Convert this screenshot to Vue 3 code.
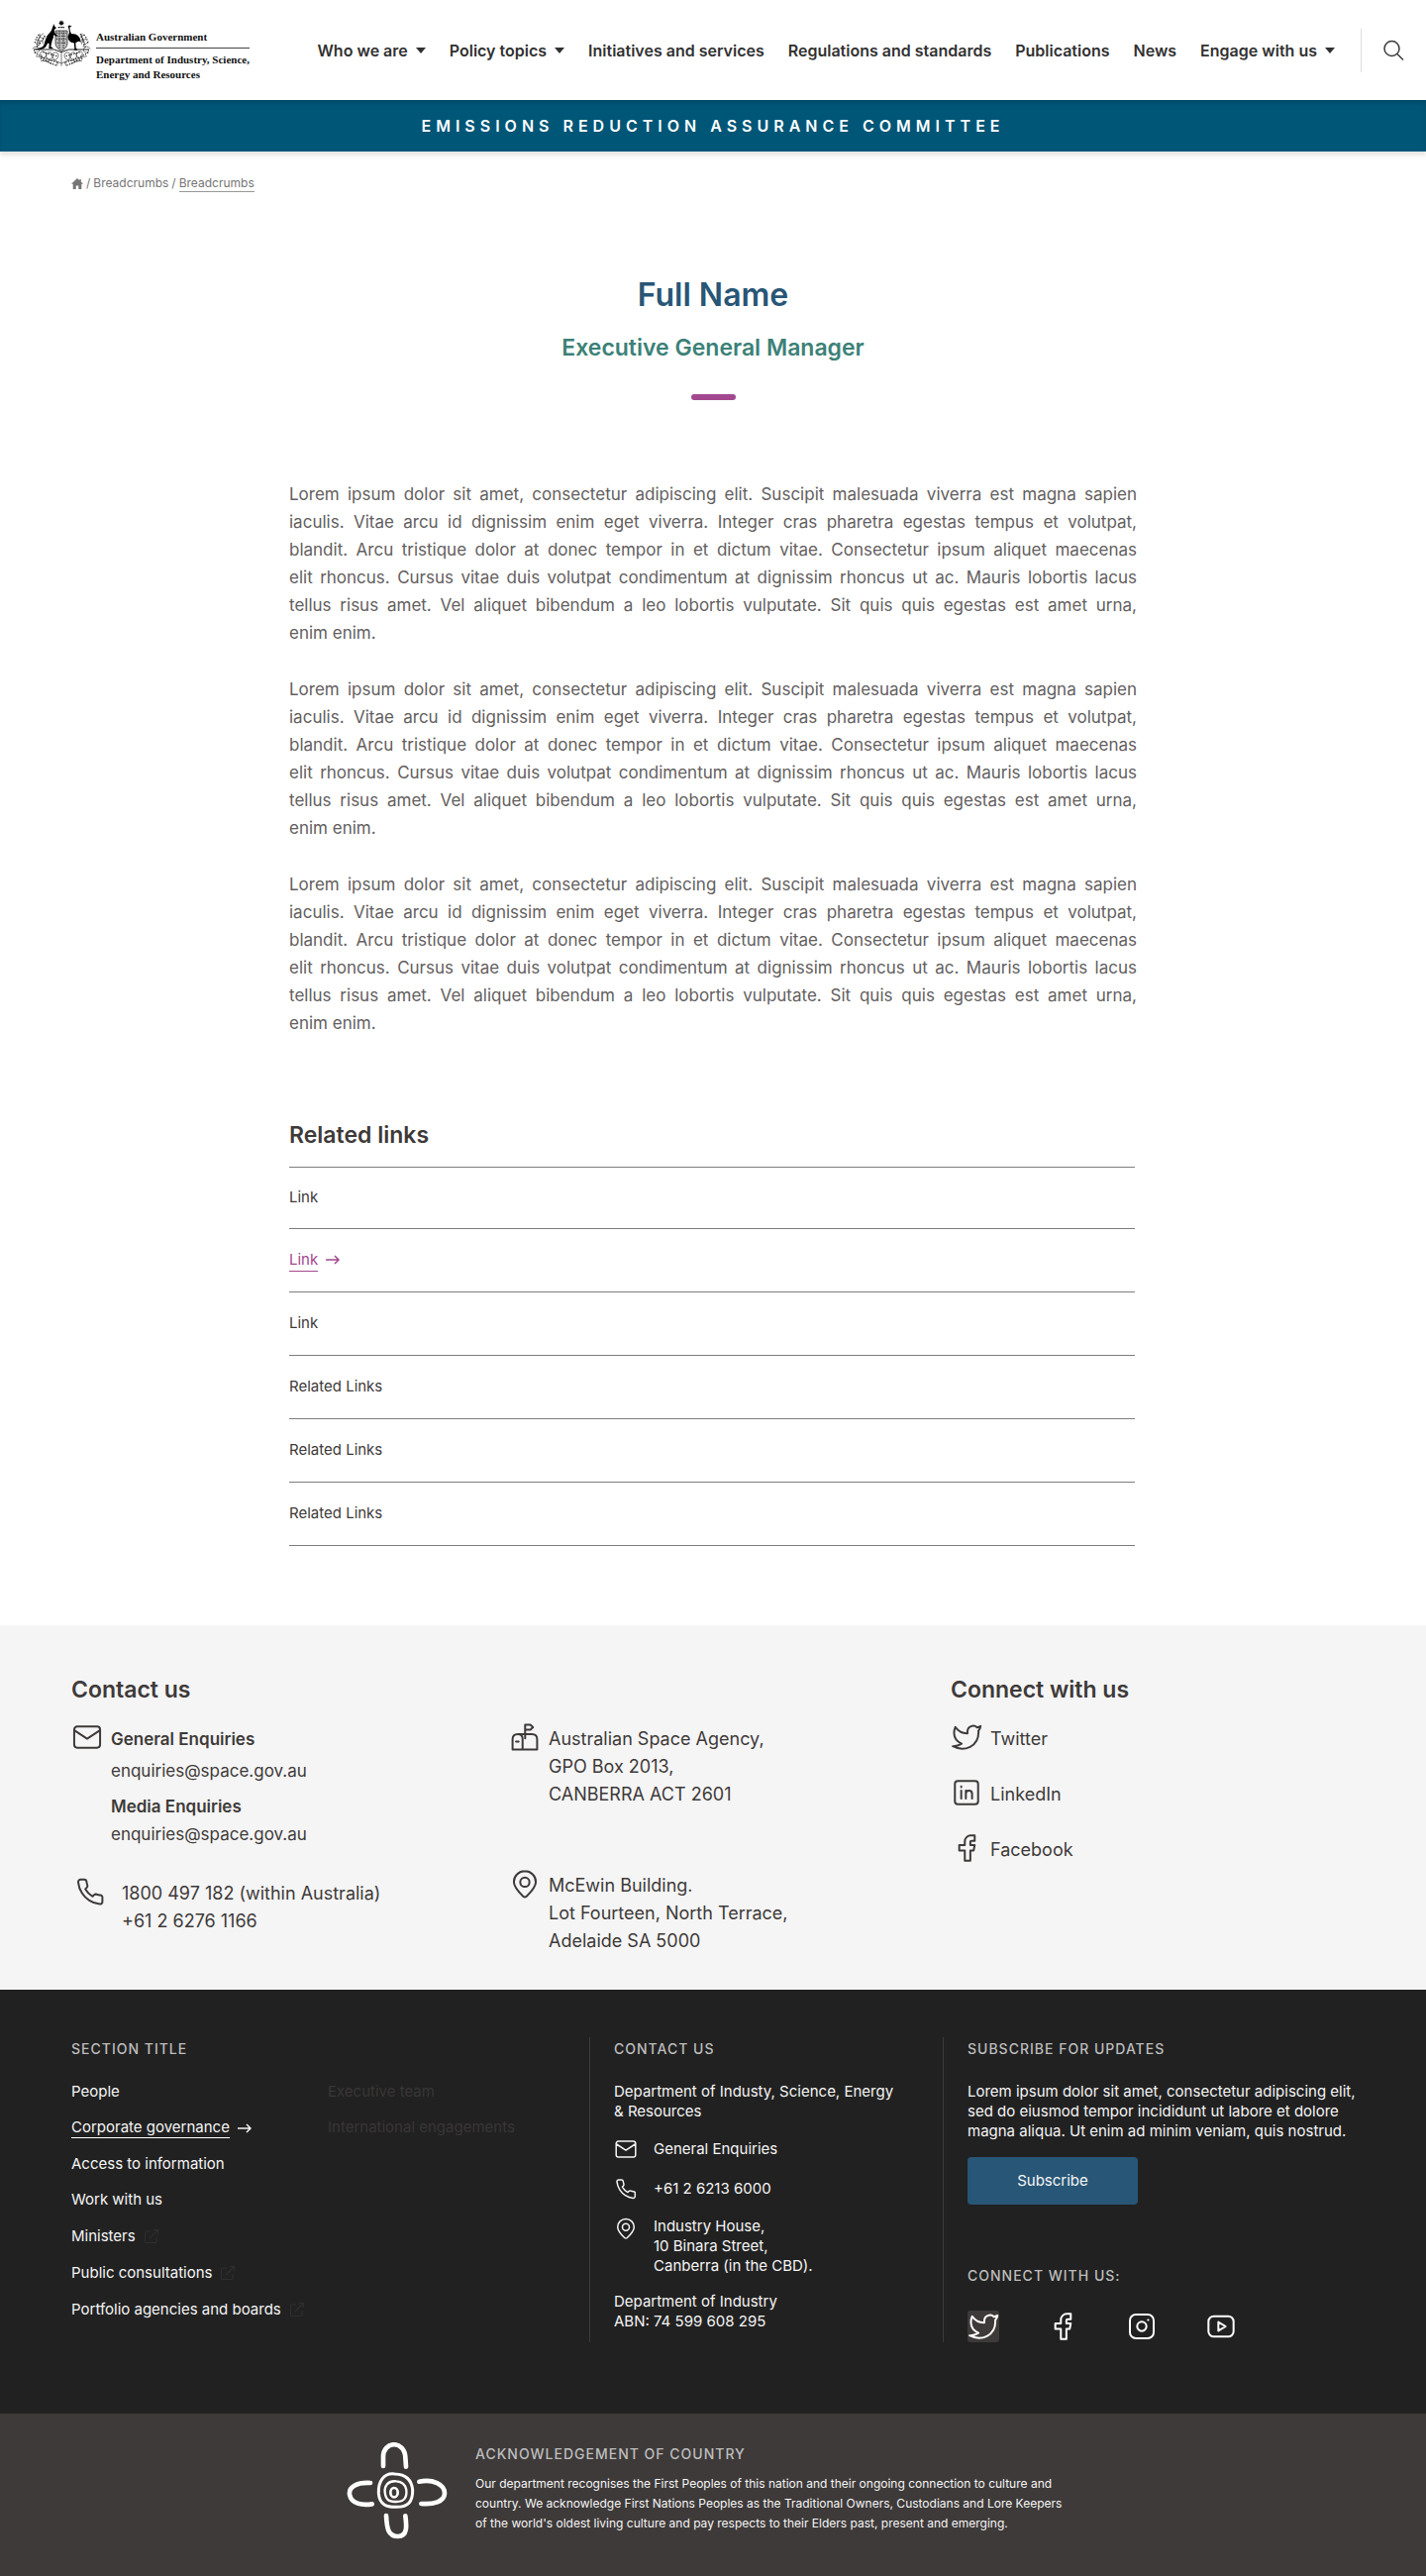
<script setup>
const nav = [
  { label: 'Who we are', menu: true },
  { label: 'Policy topics', menu: true },
  { label: 'Initiatives and services' },
  { label: 'Regulations and standards' },
  { label: 'Publications' },
  { label: 'News' },
  { label: 'Engage with us', menu: true },
]

const bioLines = [
  'Lorem ipsum dolor sit amet, consectetur adipiscing elit. Suscipit malesuada viverra est magna sapien',
  'iaculis. Vitae arcu id dignissim enim eget viverra. Integer cras pharetra egestas tempus et volutpat,',
  'blandit. Arcu tristique dolor at donec tempor in et dictum vitae. Consectetur ipsum aliquet maecenas',
  'elit rhoncus. Cursus vitae duis volutpat condimentum at dignissim rhoncus ut ac. Mauris lobortis lacus',
  'tellus risus amet. Vel aliquet bibendum a leo lobortis vulputate. Sit quis quis egestas est amet urna,',
  'enim enim.',
]

const related = [
  { label: 'Link' },
  { label: 'Link', active: true },
  { label: 'Link' },
  { label: 'Related Links' },
  { label: 'Related Links' },
  { label: 'Related Links' },
]

const sectionLinks = [
  { label: 'People' },
  { label: 'Corporate governance', active: true },
  { label: 'Access to information' },
  { label: 'Work with us' },
  { label: 'Ministers', external: true },
  { label: 'Public consultations', external: true },
  { label: 'Portfolio agencies and boards', external: true },
]

const icons = {
  mail: 'M4.5 4h15A2.3 2.3 0 0 1 21.8 6.3v11.4a2.3 2.3 0 0 1-2.3 2.3h-15a2.3 2.3 0 0 1-2.3-2.3V6.3A2.3 2.3 0 0 1 4.5 4ZM2.6 7 12 13.2 21.4 7',
  phone:
    'M21.3 17v2.6a1.8 1.8 0 0 1-2 1.8 18 18 0 0 1-7.9-2.8 17.7 17.7 0 0 1-5.5-5.5A18 18 0 0 1 3 4.9a1.8 1.8 0 0 1 1.8-2h2.7a1.8 1.8 0 0 1 1.8 1.6c.1.9.3 1.7.6 2.5a1.8 1.8 0 0 1-.4 1.9L8.4 10.1a14.5 14.5 0 0 0 5.5 5.5l1.1-1.1a1.8 1.8 0 0 1 1.9-.4c.8.3 1.7.5 2.5.6A1.8 1.8 0 0 1 21.3 17Z',
  pin: 'M12 2.5c-4.7 0-8.3 3.6-8.3 8.2 0 3.5 2.3 6.3 7 10.8q1.3 1.1 2.6 0c4.7-4.5 7-7.3 7-10.8 0-4.6-3.6-8.2-8.3-8.2ZM12 7.3a3.5 3.5 0 1 0 0 7 3.5 3.5 0 0 0 0-7Z',
  mailbox:
    'M2.7 21.3v-7.6c0-2.4 1.6-3.9 4-3.9h10.6c2.4 0 4 1.5 4 3.9v7.6ZM6.7 9.8c2.3 0 3.6 1.5 3.6 3.9v7.6M5.3 15.3h2M12.2 13V2.7M12.2 2.7h4l2 1.8-2 1.9h-4',
  twitter:
    'M22.7 3.7c-.9.5-1.7.8-2.7 1-2.6-2.6-7.4-.9-7.3 3.5v.9c-3.8.1-6.9-1.6-9.2-4.7 0 0-4 8.6 4.8 12.6-2 1.3-4.3 2-6.7 1.9 9 4.7 19.5 0 19.5-10.7l-.1-1c.9-.9 1.5-2.1 1.7-3.5Z',
  linkedin:
    'M5.5 3.2h13a2.3 2.3 0 0 1 2.3 2.3v13a2.3 2.3 0 0 1-2.3 2.3h-13a2.3 2.3 0 0 1-2.3-2.3v-13a2.3 2.3 0 0 1 2.3-2.3ZM8 10.5v6M8 7.4v.5M11.5 16.5v-6M11.5 12.8c0-3 4.7-3 4.7 0v3.7',
  facebook:
    'M18.2 2.5h-3a4.5 4.5 0 0 0-4.5 4.5v2.8H6.5v4.1h4.2v7.7h4.2v-7.7h2.5l.8-4.1h-3.3V7.4c0-.5.4-.9.9-.9h2.4Z',
  instagram:
    'M7.5 3h9A4.5 4.5 0 0 1 21 7.5v9a4.5 4.5 0 0 1-4.5 4.5h-9A4.5 4.5 0 0 1 3 16.5v-9A4.5 4.5 0 0 1 7.5 3ZM12 8.5a3.5 3.5 0 1 0 0 7 3.5 3.5 0 0 0 0-7ZM16.7 7.2h.2',
  youtube:
    'M6.5 4.3h11a4 4 0 0 1 4 4v7.4a4 4 0 0 1-4 4h-11a4 4 0 0 1-4-4V8.3a4 4 0 0 1 4-4ZM10 8.7l5.5 3.3-5.5 3.3Z',
}

const social = ['Twitter', 'LinkedIn', 'Facebook']
const footerSocial = ['twitter', 'facebook', 'instagram', 'youtube']
</script>

<template>
  <div class="page">
    <header class="top">
      <a href="#" class="brand">
        <svg class="crest" viewBox="36 30 180 144" aria-hidden="true">
          <circle cx="126" cy="40" r="6" fill="#111" />
          <path d="M126 31v18M117 40h18M120 34l12 12M132 34l-12 12" stroke="#111" stroke-width="1.5" />
          <path d="M116 53h20" stroke="#222" stroke-width="4" stroke-dasharray="4 1" />
          <path d="M108 63h36v40q-2 14-18 21-16-7-18-21Z" fill="#bbb" stroke="#333" stroke-width="2.5" />
          <path d="M111 70h30M111 88h30M120 63v56M132 63v56M112 79h28M113 100h26" stroke="#444" stroke-width="4" stroke-dasharray="4 3" />
          <path
            d="M103 42l2 7q5 3 5 7l-5 3q-1 5 0 9l6 8 4 2-5 2-7-5q0 10-5 18l-4 18 8 6h-14l1-14q-3-4-5-1-6 15-18 17-11 2-24 1 17-3 27-8 5-5 8-20 3-14 13-22 7-8 9-17Z"
            fill="#000"
          />
          <path
            d="M146 49q4-4 8-1l4 3h-6q-2 7 1 14 2 9 8 8 9-1 15 5 9 8 9 21-5-6-9-3l-7 4 1 15 6 7h-13l3-5-2-17q-13-2-17-11-4-8 1-15 3-4 1-13-2-8-3-12Z"
            fill="#000"
          />
          <path d="M42 120h62l22 8 22-8h62" fill="none" stroke="#222" stroke-width="3" />
          <g fill="none" stroke="#222" stroke-width="1.8">
            <path d="M54 113q-6-14 2-24 8-5 4-17M61 105q-10-15 2-27l9-7M70 103q-4-16 8-22M49 103l13-4M52 91l12 4M59 82l14 5M192 113q8-14 0-25-8-8-3-17M187 104q8-15-2-27M197 106l11-10M187 93l14-5M185 82l10-7" />
            <path d="M38 118q12-13 20-1 4 11-8 12-10-1-5-9M214 118q-12-13-20-1-4 11 8 12 10-1 5-9M60 133q9-14 18-2 7 12-6 15-12-1-8-13M192 133q-9-14-18-2-7 12 6 15 12-1 8-13M80 136q10-14 18-3 6 14-7 17-13-1-11-14M172 136q-10-14-18-3-6 14 7 17 13-1 11-14M100 132q12-8 17 4 0 14-12 15-10-6-5-19M152 132q-12-8-17 4 0 14 12 15 10-6 5-19M48 140l20 4 15 10 20-2 23 10 23-10 20 2 15-10 20-4M63 154l18 2 16 8M189 154l-18 2-16 8M126 128v42M117 158l-6 12M135 158l6 12" />
          </g>
          <g fill="none" stroke="#222" stroke-width="4.5" stroke-linecap="round" stroke-dasharray="0 8">
            <path d="M46 98q4-18 16-26M52 112q14-16 26-38M206 98q-4-18-16-26M198 112l-14-38M46 130q30 18 70 30M206 130q-30 18-70 30M64 148l50 22M188 148l-50 22M72 128l40 12M180 128l-40 12" />
          </g>
        </svg>
        <span class="brand-text">
          <span class="gov">Australian Government</span>
          <span class="dept">Department of Industry, Science,<br />Energy and Resources</span>
        </span>
      </a>
      <nav class="nav">
        <a v-for="item in nav" :key="item.label" href="#">
          {{ item.label }}
          <svg v-if="item.menu" class="caret" viewBox="0 0 10 6" aria-hidden="true"><path d="M0 0h10L5 6Z" fill="currentColor" /></svg>
        </a>
      </nav>
      <button class="search" type="button" aria-label="Search">
        <svg viewBox="0 0 24 24" aria-hidden="true"><circle cx="10.500" cy="10" r="7.5" /><path d="m16 15.500 6 6" /></svg>
      </button>
    </header>

    <div class="banner">Emissions Reduction Assurance Committee</div>

    <nav class="crumbs" aria-label="Breadcrumb">
      <a href="#" aria-label="Home">
        <svg viewBox="0 0 12 11" aria-hidden="true"><path d="M6 0 0 5.7h1.7V11h3V7.4h2.6V11h3V5.7H12L9.8 3.6V1H8.4v1.3Z" fill="#757575" /></svg>
      </a>
      <span>/</span><a href="#">Breadcrumbs</a><span>/</span><a href="#" class="current">Breadcrumbs</a>
    </nav>

    <main class="profile">
      <h1>Full Name</h1>
      <p class="role">Executive General Manager</p>
      <div class="bar"></div>
      <div class="bio">
        <p v-for="n in 3" :key="n">
          <span v-for="line in bioLines" :key="line">{{ line }}</span>
        </p>
      </div>
      <section class="related">
        <h2>Related links</h2>
        <ul>
          <li v-for="(item, i) in related" :key="i" :class="{ active: item.active }">
            <a href="#">{{ item.label }}</a>
            <svg v-if="item.active" class="arrow" viewBox="0 0 14 10" aria-hidden="true"><path d="M0 5h13M9 1l4 4-4 4" /></svg>
          </li>
        </ul>
      </section>
    </main>

    <section class="contact">
      <div class="col">
        <h2>Contact us</h2>
        <div class="item">
          <svg class="icon" viewBox="0 0 24 24" aria-hidden="true"><path :d="icons.mail" /></svg>
          <div class="text emails">
            <strong>General Enquiries</strong>
            <a href="#">enquiries@space.gov.au</a>
            <strong>Media Enquiries</strong>
            <a href="#">enquiries@space.gov.au</a>
          </div>
        </div>
        <div class="item phone">
          <svg class="icon" viewBox="0 0 24 24" aria-hidden="true"><path :d="icons.phone" /></svg>
          <div class="text">1800 497 182 (within Australia)<br />+61 2 6276 1166</div>
        </div>
      </div>
      <div class="col places">
        <div class="item">
          <svg class="icon" viewBox="0 0 24 24" aria-hidden="true"><path :d="icons.mailbox" /></svg>
          <address class="text">Australian Space Agency,<br />GPO Box 2013,<br />CANBERRA ACT 2601</address>
        </div>
        <div class="item">
          <svg class="icon" viewBox="0 0 24 24" aria-hidden="true"><path :d="icons.pin" /></svg>
          <address class="text">McEwin Building.<br />Lot Fourteen, North Terrace,<br />Adelaide SA 5000</address>
        </div>
      </div>
      <div class="col connect">
        <h2>Connect with us</h2>
        <a v-for="name in social" :key="name" href="#" class="item">
          <svg class="icon" viewBox="0 0 24 24" aria-hidden="true"><path :d="icons[name.toLowerCase()]" /></svg>
          <span class="text">{{ name }}</span>
        </a>
      </div>
    </section>

    <footer class="footer">
      <div class="fcol sections">
        <h3>Section title</h3>
        <div class="lists">
          <ul>
            <li v-for="item in sectionLinks" :key="item.label" :class="{ active: item.active, external: item.external }">
              <a href="#">{{ item.label }}</a>
              <svg v-if="item.active" class="arrow" viewBox="0 0 14 10" aria-hidden="true"><path d="M0 5h13M9 1l4 4-4 4" /></svg>
              <svg v-if="item.external" class="ext" viewBox="0 0 16 16" aria-hidden="true"><path d="M7 3H3a1.5 1.5 0 0 0-1.5 1.5v8.500A1.5 1.5 0 0 0 3 14.500h8.500A1.5 1.5 0 0 0 13 13V9M6 10l8.500-8.500M10 1.500h4.500V6" /></svg>
            </li>
          </ul>
          <ul class="dim">
            <li><a href="#">Executive team</a></li>
            <li><a href="#">International engagements</a></li>
          </ul>
        </div>
      </div>
      <div class="fcol">
        <h3>Contact us</h3>
        <div class="stack">
          <p>Department of Industy, Science, Energy<br />&amp; Resources</p>
          <a href="#" class="line">
            <svg viewBox="0 0 24 24" aria-hidden="true"><path :d="icons.mail" /></svg><span>General Enquiries</span>
          </a>
          <a href="#" class="line">
            <svg viewBox="0 0 24 24" aria-hidden="true"><path :d="icons.phone" /></svg><span>+61 2 6213 6000</span>
          </a>
          <div class="line top-line">
            <svg viewBox="0 0 24 24" aria-hidden="true"><path :d="icons.pin" /></svg>
            <address>Industry House,<br />10 Binara Street,<br />Canberra (in the CBD).</address>
          </div>
          <p>Department of Industry<br />ABN: 74 599 608 295</p>
        </div>
      </div>
      <div class="fcol">
        <h3>Subscribe for updates</h3>
        <p class="blurb">
          Lorem ipsum dolor sit amet, consectetur adipiscing elit,<br />sed do eiusmod tempor incididunt ut labore et dolore<br />magna
          aliqua. Ut enim ad minim veniam, quis nostrud.
        </p>
        <button class="subscribe" type="button">Subscribe</button>
        <h3>Connect with us:</h3>
        <div class="social">
          <a v-for="(name, i) in footerSocial" :key="name" href="#" :aria-label="name" :class="{ on: i === 0 }">
            <svg viewBox="0 0 24 24" aria-hidden="true"><path :d="icons[name]" /></svg>
          </a>
        </div>
      </div>
    </footer>

    <section class="country">
      <svg class="emblem" viewBox="30 30 306 300" aria-hidden="true">
        <g fill="none" stroke="#fff" stroke-width="14" stroke-linecap="round" stroke-linejoin="round">
          <path d="M141 102V75C140 25 205 23 208 75l2 29" />
          <path d="M102 153C60 151 36 165 39 188c5 28 37 34 68 29" />
          <path d="M250 149c40-9 78 8 77 36-1 25-34 34-71 31" />
          <path d="M150 252c2 40 6 63 36 63 29 0 26-33 22-62" />
          <path d="M176 126C142 122 125 149 127 185c3 35 25 42 55 41 34 0 49-16 48-52-3-30-22-47-54-48Z" stroke-width="9" />
          <path d="M181 148C156 145 144 162 146 181c3 26 15 29 35 29 24 0 32-13 30-36-3-17-11-25-30-26Z" stroke-width="7" />
          <ellipse cx="174" cy="182" rx="11" ry="14" stroke-width="8" />
        </g>
      </svg>
      <div class="ack">
        <h3>Acknowledgement of Country</h3>
        <p>
          Our department recognises the First Peoples of this nation and their ongoing connection to culture and<br />country. We
          acknowledge First Nations Peoples as the Traditional Owners, Custodians and Lore Keepers<br />of the world's oldest living
          culture and pay respects to their Elders past, present and emerging.
        </p>
      </div>
    </section>
  </div>
</template>

<style>
body {
  margin: 0;
  background: #fff;
}
</style>

<style scoped>
.page {
  font-family: Inter, 'Public Sans', 'Liberation Sans', sans-serif;
  color: #3e3a39;
}
.page *,
.page *::before {
  box-sizing: border-box;
}
h1,
h2,
h3,
p,
ul {
  margin: 0;
  padding: 0;
}
ul {
  list-style: none;
}
a {
  color: inherit;
  text-decoration: none;
}
address {
  font-style: normal;
}
button {
  font: inherit;
  border: 0;
  padding: 0;
  cursor: pointer;
}
svg {
  display: block;
  flex: none;
}

.top {
  display: flex;
  align-items: center;
  height: 101px;
  padding: 0 21px 0 32px;
}
.brand {
  display: flex;
  align-items: flex-start;
  gap: 5px;
  height: 62px;
  color: #111;
  font: bold 11px/15px 'Liberation Serif', 'Times New Roman', serif;
  white-space: nowrap;
}
.crest {
  width: 60px;
  height: 48px;
}
.brand-text {
  display: flex;
  flex-direction: column;
  padding-top: 10px;
}
.gov {
  padding-bottom: 3px;
  border-bottom: 1px solid #444;
  margin-bottom: 4px;
}
.nav {
  display: flex;
  flex: 1;
  justify-content: flex-end;
  gap: 24px;
  padding-right: 26px;
  font-size: 16px;
  font-weight: 600;
  line-height: 24px;
  color: #313131;
  white-space: nowrap;
}
.nav a {
  display: flex;
  align-items: center;
  gap: 8px;
}
.caret {
  width: 10px;
  height: 6px;
}
.search {
  display: flex;
  align-items: center;
  height: 44px;
  padding-left: 20px;
  border-left: 1px solid #ddd;
  background: none;
}
.search svg {
  width: 24px;
  height: 24px;
  fill: none;
  stroke: #3e3a39;
  stroke-width: 1.5;
}

.banner {
  height: 52px;
  background: #005677;
  box-shadow: inset 0 4px 4px -1px rgba(0, 0, 0, 0.14), 0 4px 4px rgba(0, 0, 0, 0.1);
  color: #fff;
  font-size: 16px;
  font-weight: 600;
  line-height: 52px;
  letter-spacing: 5px;
  text-align: center;
  text-transform: uppercase;
}

.crumbs {
  display: flex;
  align-items: center;
  gap: 3px;
  padding: 23px 5% 0;
  font-size: 12px;
  line-height: 18px;
  color: #757575;
}
.crumbs svg {
  width: 12px;
  height: 11px;
}
.crumbs .current {
  line-height: 16px;
  box-shadow: 0 1px 0 #999;
}

.profile {
  width: 856px;
  max-width: 90%;
  margin: 0 auto;
  padding: 84px 0 80px;
}
h1 {
  font-size: 32px;
  line-height: 40px;
  font-weight: 600;
  color: #285676;
  text-align: center;
}
.role {
  margin-top: 17px;
  font-size: 23px;
  line-height: 32px;
  font-weight: 600;
  color: #3c8177;
  text-align: center;
}
.bar {
  width: 45px;
  height: 6px;
  margin: 31px auto 81px;
  border-radius: 3px;
  background: #a3488e;
}
.bio {
  display: flex;
  flex-direction: column;
  gap: 29px;
  font-size: 17px;
  line-height: 28px;
  color: #636060;
}
.bio span {
  display: block;
  text-align: justify;
  text-align-last: justify;
}
.bio span:last-child {
  text-align-last: left;
}
h2 {
  font-size: 23px;
  line-height: 32px;
  font-weight: 600;
}
.related {
  margin-top: 83px;
  padding-right: 2px;
}
.related ul {
  margin-top: 16px;
  border-top: 1px solid #807d7d;
}
.related li {
  display: flex;
  align-items: center;
  gap: 8px;
  padding: 20px 0 21px;
  border-bottom: 1px solid #807d7d;
  font-size: 15px;
  line-height: 22px;
}
.related li:first-child {
  padding: 19px 0 20px;
}
.related .active {
  color: #a3488e;
}
.related .active a {
  box-shadow: 0 1px 0 #a3488e;
}
.arrow {
  width: 14px;
  height: 10px;
  fill: none;
  stroke: currentColor;
  stroke-width: 1.5;
}

.contact {
  display: grid;
  grid-template-columns: 442fr 446fr 408fr;
  padding: 49px 5% 35px;
  background: #f5f5f5;
  font-size: 18px;
  line-height: 28px;
}
.contact h2 {
  margin-bottom: 16px;
}
.places {
  padding-top: 48px;
  display: flex;
  flex-direction: column;
  gap: 60px;
}
.item {
  display: flex;
  align-items: flex-start;
  gap: 8px;
}
.item .text {
  padding-top: 4px;
}
.icon {
  width: 32px;
  height: 32px;
  fill: none;
  stroke: currentColor;
  stroke-width: 1.5;
  stroke-linejoin: round;
  stroke-linecap: round;
}
.emails {
  display: grid;
  font-size: 17px;
}
.emails strong {
  font-weight: 600;
}
.emails strong:first-child {
  margin-bottom: 4px;
}
.emails strong:nth-of-type(2) {
  margin-top: 8px;
}
.phone {
  margin-top: 28px;
  padding-left: 3px;
  gap: 16px;
}
.connect .item + .item {
  margin-top: 24px;
}

.footer {
  display: grid;
  grid-template-columns: 523fr 357fr 416fr;
  padding: 48px 5% 72px;
  background: #212121;
  color: #f5f5f5;
  font-size: 15px;
  line-height: 20px;
}
.fcol {
  min-width: 0;
}
.fcol + .fcol {
  padding-left: 24px;
  border-left: 1px solid #3e3a39;
}
h3 {
  font-size: 14px;
  line-height: 24px;
  font-weight: 500;
  letter-spacing: 1px;
  text-transform: uppercase;
  color: #bdbdbd;
}
.fcol > h3 {
  margin-bottom: 21px;
}
.lists {
  display: grid;
  grid-template-columns: 259fr 264fr;
}
.lists ul {
  display: flex;
  flex-direction: column;
  gap: 16px;
}
.lists li {
  display: flex;
  align-items: center;
  gap: 8px;
  white-space: nowrap;
}
.lists .active a {
  border-bottom: 1px solid #fff;
}
.lists .external {
  min-height: 21px;
}
.dim {
  color: #393636;
}
.ext {
  width: 16px;
  height: 16px;
  fill: none;
  stroke: #302e2e;
  stroke-width: 1.2;
}
.stack {
  display: flex;
  flex-direction: column;
  gap: 16px;
  white-space: nowrap;
}
.line {
  display: flex;
  align-items: center;
  gap: 16px;
}
.top-line {
  align-items: flex-start;
}
.line svg,
.social svg {
  width: 24px;
  height: 24px;
  fill: none;
  stroke: currentColor;
  stroke-width: 1.5;
  stroke-linejoin: round;
  stroke-linecap: round;
}
.blurb {
  white-space: nowrap;
}
.subscribe {
  display: block;
  width: 172px;
  height: 48px;
  margin: 16px 0 60px;
  border-radius: 4px;
  background: #285676;
  color: #f5f5f5;
}
.social {
  display: flex;
  gap: 48px;
  margin-top: 23px;
  color: #fff;
}
.fcol > h3:nth-of-type(2) {
  margin-bottom: 0;
}
.social a {
  border-radius: 3px;
}
.social .on {
  background: #3e3a39;
}
.social svg {
  width: 32px;
  height: 32px;
}

.country {
  display: flex;
  justify-content: center;
  gap: 28px;
  padding: 29px 5% 35px;
  background: #3e3a39;
  color: #f5f5f5;
}
.emblem {
  width: 102px;
  height: 100px;
}
.ack {
  width: 610px;
}
.ack p {
  margin-top: 8px;
  font-size: 12px;
  line-height: 20px;
}
</style>
